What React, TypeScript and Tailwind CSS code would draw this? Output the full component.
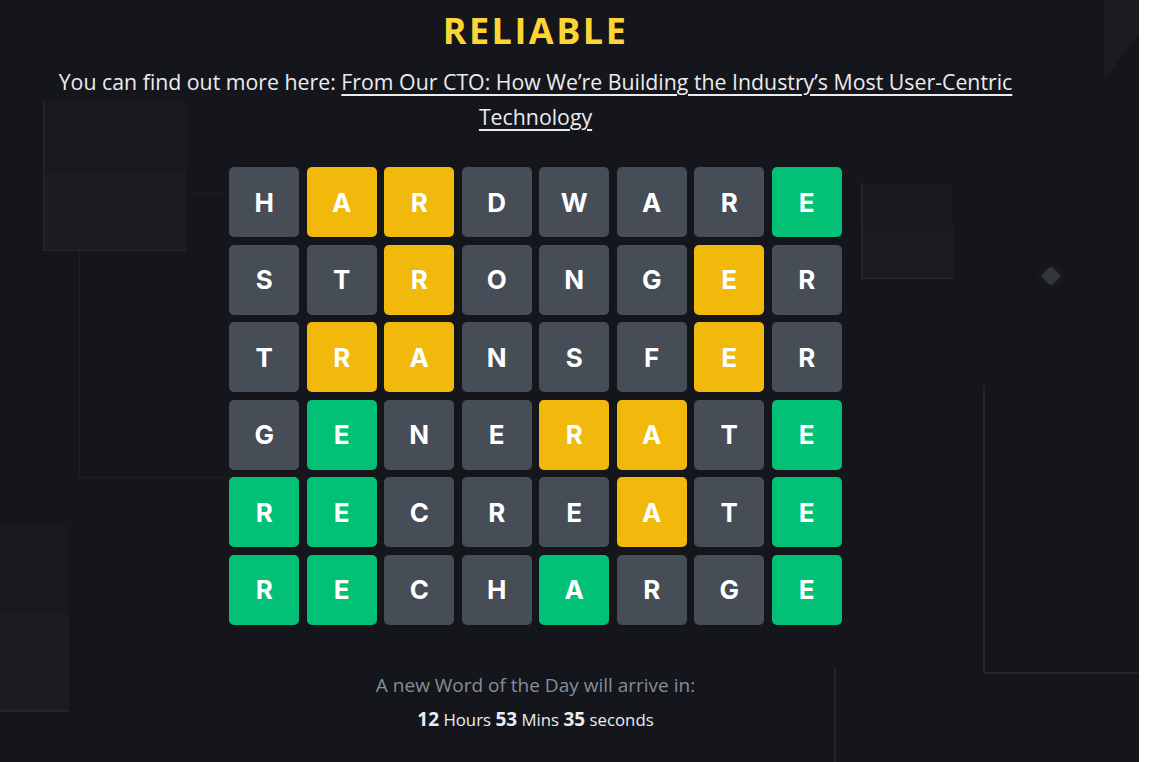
type TileState = 'gray' | 'yellow' | 'green';

// y = yellow, G = green, anything else = gray
const ROWS: [string, string][] = [
  ['HARDWARE', 'gyyggggG'],
  ['STRONGER', 'ggygggyg'],
  ['TRANSFER', 'gyygggyg'],
  ['GENERATE', 'gGggyygG'],
  ['RECREATE', 'GGgggygG'],
  ['RECHARGE', 'GGggGggG'],
];

const GRID: { letter: string; state: TileState }[] = ROWS.flatMap(([word, states]) =>
  word.split('').map((letter, c) => ({
    letter,
    state: states[c] === 'y' ? 'yellow' : states[c] === 'G' ? 'green' : 'gray',
  })),
);

const tileColor: Record<TileState, string> = {
  gray: 'bg-[#474d57]',
  yellow: 'bg-[#f0b90b]',
  green: 'bg-[#02c076]',
};

const Tile = ({ letter, state }: { letter: string; state: TileState }) => (
  <div
    className={`flex h-[70px] w-[70px] items-center justify-center rounded-[5px] text-[26px] font-bold text-white ${tileColor[state]}`}
  >
    {letter}
  </div>
);

const Backdrop = () => (
  <div className="pointer-events-none absolute inset-0 overflow-hidden">
    {/* top-left box */}
    <div className="absolute left-[43px] top-[101px] flex h-[150px] w-[143px] flex-col border-b-2 border-l-2 border-[#22232a]">
      <div className="h-[72px] bg-[#18191e]" />
      <div className="flex-1 bg-[#1b1c21]" />
    </div>
    <div className="absolute left-[185px] top-[193px] h-px w-[44px] bg-[#1c1d23]" />
    {/* left L lines */}
    <div className="absolute left-[79px] top-[251px] h-[227px] w-[227px] border-b border-l border-[#1e1f25]" />
    {/* right box */}
    <div className="absolute left-[861px] top-[183px] h-[96px] w-[92px] border-b-2 border-l-2 border-[#24252c]">
      <div className="h-[44px] bg-[#191a1f]" />
      <div className="h-[50px] bg-[#1b1c21]" />
    </div>
    {/* diamond */}
    <div className="absolute left-[1044px] top-[269px] h-[14px] w-[14px] rotate-45 rounded-[2px] bg-[#34363e] shadow-[0_0_6px_2px_#202229]" />
    {/* right L */}
    <div className="absolute left-[983px] top-[385px] h-[289px] w-[160px] border-b-2 border-l-2 border-[#24252c]" />
    {/* vertical line bottom */}
    <div className="absolute left-[834px] top-[667px] h-[100px] w-[2px] bg-[#23242b]" />
    {/* bottom-left box */}
    <div className="absolute left-0 top-[523px] flex h-[189px] w-[69px] flex-col border-b-2 border-[#24252c]">
      <div className="h-[91px] bg-[#18191e]" />
      <div className="flex-1 bg-[#1b1c21]" />
    </div>
    {/* top-right shape */}
    <div className="absolute left-[1104px] top-0 h-[80px] w-[40px] bg-[#1b1c21] [clip-path:polygon(0_0,100%_0,100%_35%,0_100%)]" />
  </div>
);

export default function App() {
  return (
    <div className="flex h-[762px] w-full overflow-hidden bg-white">
      <div className="relative h-full w-[1139px] shrink-0 bg-[#15161b]">
        <Backdrop />
        <div className="relative flex w-[1071px] flex-col items-center font-['Open_Sans',sans-serif]">
          <h1 className="mt-[11px] h-[40px] text-[36px] font-bold leading-[40px] tracking-[2.5px] text-[#fcd535]">
            RELIABLE
          </h1>
          <p className="mt-[13px] w-[1000px] text-center text-[21.3px] leading-[35px] text-[#eaecef]">
            You can find out more here:{' '}
            <a href="#" className="underline underline-offset-[4px]">
              From Our CTO: How We’re Building the Industry’s Most User-Centric Technology
            </a>
          </p>
          <div className="mt-[33px] grid grid-cols-8 gap-[7.5px] font-['Inter',sans-serif]">
            {GRID.map((t, i) => (
              <Tile key={i} letter={t.letter} state={t.state} />
            ))}
          </div>
          <div className="mt-[46px] text-[19px] leading-[28px] text-[#848e9c]">
            A new Word of the Day will arrive in:
          </div>
          <div className="mt-[8px] text-[16.8px] leading-[24px] text-[#eaecef]">
            <span className="text-[19px] font-bold">12</span> Hours{' '}
            <span className="text-[19px] font-bold">53</span> Mins{' '}
            <span className="text-[19px] font-bold">35</span> seconds
          </div>
        </div>
      </div>
      <div className="flex-1 bg-white" />
    </div>
  );
}
